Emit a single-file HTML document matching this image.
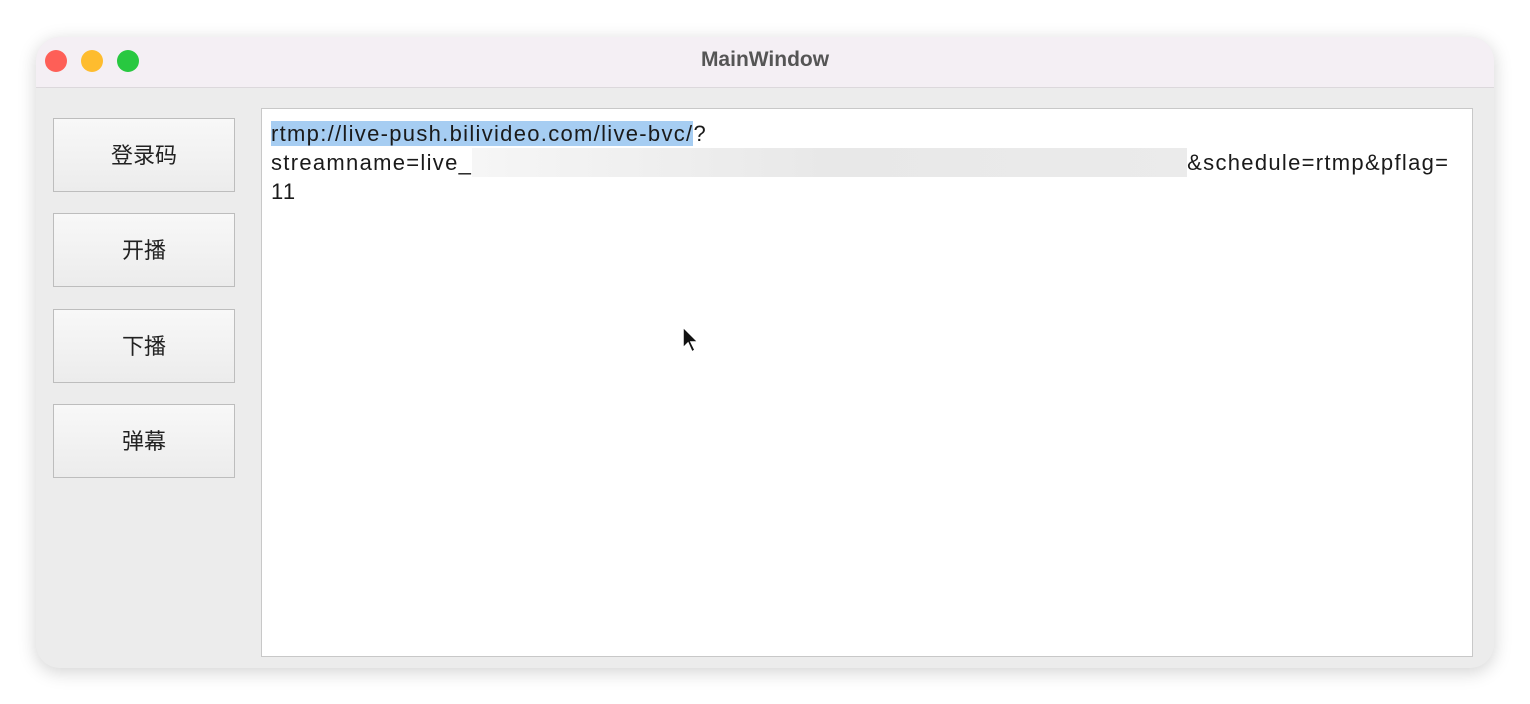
<!DOCTYPE html>
<html><head><meta charset="utf-8"><style>
body{margin:0;width:1530px;height:704px;background:#fff;position:relative;overflow:hidden;font-family:"Liberation Sans","Noto Sans CJK SC",sans-serif}
.win{position:absolute;left:36px;top:37px;width:1458px;height:631px;border-radius:24px;background:#ececec;overflow:hidden;box-shadow:0 4px 18px rgba(0,0,0,.18)}
.title{position:absolute;left:0;top:0;width:100%;height:50px;background:#f4eff4;border-bottom:1px solid #dcd8dc;text-align:center;line-height:46px;font-size:21px;font-weight:bold;color:#555}
.dot{position:absolute;top:13px;width:22px;height:22px;border-radius:50%}
.btn{position:absolute;left:17px;width:180px;height:72px;border:1px solid #bdbdbd;background:linear-gradient(#f8f8f8,#ececec);font-size:22px;text-align:center;line-height:74px;color:#222}
.ta{position:absolute;left:225px;top:71px;width:1210px;height:547px;background:#fff;border:1px solid #c8c8c8}
.t{position:absolute;left:9px;font-size:22px;letter-spacing:1.3px;line-height:29px;color:#1a1a1a;white-space:nowrap}
</style></head><body>
<div class="win">
<div class="title">MainWindow
<div class="dot" style="left:9px;background:#fe5f57"></div>
<div class="dot" style="left:45px;background:#febc2e"></div>
<div class="dot" style="left:81px;background:#28c840"></div>
</div>
<div class="btn" style="top:81px">登录码</div>
<div class="btn" style="top:176px">开播</div>
<div class="btn" style="top:272px">下播</div>
<div class="btn" style="top:367px">弹幕</div>
<div class="ta">
<div class="t" style="top:10px"><span style="background:#a6cdf2">rtmp://live-push.bilivideo.com/live-bvc/</span>?</div>
<div class="t" style="top:39px">streamname=live_<span style="display:inline-block;width:715px;height:29px;vertical-align:top;background:linear-gradient(90deg,#f6f6f6,#e8e8e8 50%,#ebebeb)"></span>&amp;schedule=rtmp&amp;pflag=</div>
<div class="t" style="top:68px">11</div>
</div>
</div>
<svg style="position:absolute;left:682px;top:326px" width="18" height="30" viewBox="0 0 18 30"><path d="M1 1 L1 22 L6 17 L10 26 L13 24 L9 16 L16 16 Z" fill="#111" stroke="#fff" stroke-width="1.5"/></svg>
</body></html>
